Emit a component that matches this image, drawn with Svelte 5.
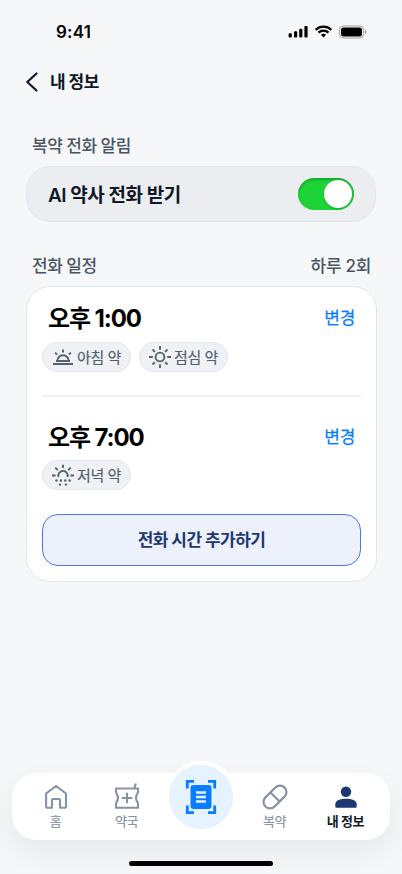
<script>
  let enabled = $state(true);
  const schedules = [
    { time: '오후 1:00', pills: [{ icon: 'sunrise', label: '아침 약' }, { icon: 'sun', label: '점심 약' }] },
    { time: '오후 7:00', pills: [{ icon: 'sunset', label: '저녁 약' }] }
  ];
</script>

<div class="screen">
  <div class="status">
    <span class="clock">9:41</span>
    <svg width="80" height="14" viewBox="0 0 80 14">
      <g fill="#000">
        <rect x="0.6" y="8.3" width="3.2" height="4.2" rx="1" />
        <rect x="6" y="6.2" width="3.2" height="6.3" rx="1" />
        <rect x="11.2" y="3.8" width="3.2" height="8.7" rx="1" />
        <rect x="16.4" y="1" width="3.2" height="11.5" rx="1" />
        <path d="M35.5 8.7c1 0 1.9.4 2.6 1l-2.6 2.7-2.6-2.7c.7-.6 1.6-1 2.6-1z" />
      </g>
      <g fill="none" stroke="#000" stroke-width="2.3">
        <path d="M27.7 4.800a11.200 11.200 0 0 1 15.600 0" />
        <path d="M30.500 7.700a7.200 7.200 0 0 1 10 0" />
      </g>
      <rect x="51.500" y="1" width="24" height="12" rx="3.800" fill="none" stroke="#000" stroke-opacity=".36" />
      <rect x="53" y="2.500" width="21" height="9" rx="2.500" />
      <path d="M77 5v4c.8-.3 1.300-1.100 1.300-2S77.800 5.300 77 5z" fill="#000" opacity=".4" />
    </svg>
  </div>

  <header>
    <svg width="14" height="20" viewBox="0 0 14 20"><path d="M11.500 1.500 2.300 10l9.200 8.500" fill="none" stroke="#101828" stroke-width="2.200" stroke-linecap="round" stroke-linejoin="round" /></svg>
    <h1>내 정보</h1>
  </header>

  <main>
    <h2 class="label">복약 전화 알림</h2>
    <section class="toggle-card">
      <span class="toggle-title">AI 약사 전화 받기</span>
      <button class="switch" class:on={enabled} aria-label="AI 약사 전화 받기" onclick={() => (enabled = !enabled)}><i></i></button>
    </section>

    <div class="label row"><span>전화 일정</span><span class="count">하루 2회</span></div>
    <section class="card">
      {#each schedules as s}
        <article>
          <div class="head"><span class="time">{s.time}</span><span class="edit">변경</span></div>
          <div class="pills">
            {#each s.pills as p}
              <span class="pill">
                <svg width="22" height="22" viewBox="0 0 22 22" fill="none" stroke="#506070" stroke-width="1.900">
                  {#if p.icon === 'sunrise'}
                    <path d="M1 18h20M4 15h14M5.300 15a5.700 5.700 0 0 1 11.400 0M11 3.500v3M3.100 6.600l2 2M18.900 6.600l-2 2" />
                  {:else if p.icon === 'sun'}
                    <circle cx="11" cy="11" r="4.400" />
                    <path d="M11 0v3.800M11 18.200V22M0 11h3.800M18.200 11H22M3.500 3.500l2.400 2.400M16.100 16.100l2.400 2.400M18.500 3.500l-2.400 2.400M5.900 16.100l-2.400 2.400" />
                  {:else}
                    <path d="M11 .7v3.300M0 11.500h3.600M18.400 11.500H22M3.300 3.700l2.500 2.500M18.700 3.700l-2.500 2.500M6.500 12.900a4.700 4.700 0 1 1 9 0" />
                    <g fill="#506070" stroke="none"><circle cx="4.500" cy="16.500" r="1.200" /><circle cx="8.900" cy="16.500" r="1.200" /><circle cx="13.300" cy="16.500" r="1.200" /><circle cx="17.700" cy="16.500" r="1.200" /><circle cx="8" cy="20.600" r="1.200" /><circle cx="14" cy="20.600" r="1.200" /></g>
                  {/if}
                </svg>
                <span class="pill-text">{p.label}</span>
              </span>
            {/each}
          </div>
        </article>
      {/each}
      <button class="add">전화 시간 추가하기</button>
    </section>
  </main>

  <nav>
    <div class="item">
      <svg width="26" height="26" viewBox="0 0 26 26" fill="none" stroke="#8593a3" stroke-width="2.100" stroke-linejoin="round"><path d="M3.100 9.500 13 2l10 7.500v13.300a1 1 0 0 1-1 1h-5V16a1 1 0 0 0-1-1h-6a1 1 0 0 0-1 1v7.800H4.100a1 1 0 0 1-1-1z" /></svg>
      <span>홈</span>
    </div>
    <div class="item">
      <svg width="26" height="26" viewBox="0 0 26 26" fill="none" stroke="#8593a3" stroke-width="2.100" stroke-linejoin="round"><path d="M2 4.500h22v3.800c-2.500 3.500-2.500 7.500 0 11v4.500H2v-4.500c2.500-3.500 2.500-7.500 0-11zM20.300 4.500 21.800-.5M13 8.700v10.600M7.700 14h10.600" /></svg>
      <span>약국</span>
    </div>
    <div class="scan">
      <svg width="32" height="36" viewBox="0 0 32 36">
        <path d="M2.300 9.500V2.300H9M23 2.300h6.700v7.200M29.700 26.500v7.200H23M9 33.700H2.300v-7.200" fill="none" stroke="#0a7cff" stroke-width="2.800" />
        <rect x="5.500" y="6" width="21" height="24" rx="3" fill="#0a7cff" />
        <path d="M11 13.500h10M11 18h10M11 22.500h10" stroke="#e5f2ff" stroke-width="2.700" />
      </svg>
    </div>
    <div class="item">
      <svg width="26" height="26" viewBox="0 0 26 26" fill="none" stroke="#8593a3" stroke-width="2.200"><g transform="rotate(-45 13 13)"><rect x="-.5" y="6.500" width="27" height="13" rx="6.500" /><path d="M13 6.500v13" /></g></svg>
      <span>복약</span>
    </div>
    <div class="item active">
      <svg width="26" height="26" viewBox="0 0 26 26" fill="#1d3871"><circle cx="13" cy="7.700" r="5.200" /><path d="M2.300 20.300c0-4 5-5.600 10.700-5.600s10.700 1.600 10.700 5.600v2.200c0 .8-.5 1.300-1.300 1.300H3.600c-.8 0-1.300-.5-1.300-1.300z" /></svg>
      <span>내 정보</span>
    </div>
  </nav>
  <div class="home"></div>
</div>

<style>
  :global(body) { background: #f5f7f9; }
  * { box-sizing: border-box; margin: 0; }
  .screen { width: 402px; height: 874px; display: flex; flex-direction: column; overflow: hidden; background: #f5f7f9; color: #101828; font-family: Inter, "Noto Sans CJK KR", sans-serif; white-space: nowrap; }
  button { font: inherit; padding: 0; border: 0; }
  svg { display: block; flex: none; overflow: visible; }
  .status { height: 64px; padding: 0 34px 0 56px; display: flex; align-items: center; justify-content: space-between; }
  .clock { font-size: 17px; font-weight: 600; color: #000; letter-spacing: .2px; }
  header { height: 36px; padding-left: 25px; display: flex; align-items: center; gap: 11px; }
  h1 { font-size: 17px; line-height: 24px; font-weight: 700; letter-spacing: -.55px; }
  main { padding: 34px 25px 0 26px; }
  .label { font-size: 17px; line-height: 24px; font-weight: 500; color: #4a5564; padding-left: 6px; letter-spacing: -.5px; }
  .toggle-card { width: 350px; height: 56px; margin-top: 8px; padding: 0 21px 0; border: 1px solid #e1e7ef; border-radius: 24px; background: #ecedf1; display: flex; align-items: center; justify-content: space-between; }
  .toggle-title { font-size: 19px; font-weight: 600; letter-spacing: -.5px; padding-bottom: 2px; }
  .switch { width: 56px; height: 32px; padding: 2px; border-radius: 16px; background: #b8bec6; display: flex; box-shadow: inset 0 2px 3px rgba(0, 0, 0, .22); }
  .switch.on { background: #1dd337; justify-content: flex-end; }
  .switch i { width: 28px; height: 28px; border-radius: 50%; background: #fff; box-shadow: 0 1px 2px rgba(0, 0, 0, .2); }
  .row { display: flex; justify-content: space-between; margin-top: 32px; padding-right: 6px; }
  .count { letter-spacing: -.3px; }
  .card { height: 296px; margin-top: 8px; padding: 0 15px; border: 1px solid #e1e7ef; border-radius: 24px; background: #fff; }
  article { height: 108px; padding-top: 14px; }
  article + article { height: 119px; padding-top: 24px; border-top: 2px solid #eff1f4; }
  .head { height: 30px; padding: 0 6px; display: flex; align-items: center; justify-content: space-between; }
  article + article .head { margin-top: -1px; }
  .time { font-size: 24px; font-weight: 700; color: #000; letter-spacing: -1.1px; }
  .edit { font-size: 17px; font-weight: 400; -webkit-text-stroke: .25px #0a7cff; color: #0a7cff; letter-spacing: -.3px; }
  .pills { display: flex; gap: 8px; margin-top: 11px; }
  article + article .pills { margin-top: 10px; }
  .pill { width: 89px; height: 30px; padding-left: 9px; border: 1px solid #dfe6ee; border-radius: 15px; background: #f0f1f4; display: flex; align-items: center; gap: 3px; color: #506070; font-size: 15px; letter-spacing: -.4px; }
  .pill-text { padding-bottom: 2px; -webkit-text-stroke: .15px #506070; }
  .add { display: block; width: 319px; height: 52px; padding-bottom: 3px; border: 1px solid #4879e5; border-radius: 16px; background: #edf1fc; color: #1d3871; font-size: 17px; font-weight: 700; letter-spacing: -.55px; text-align: center; }
  nav { width: 378px; height: 67px; margin: auto 12px 0; padding: 0 9px 0 8px; border-radius: 24px; background: #fff; display: flex; box-shadow: 0 12px 28px rgba(30, 35, 40, .07); }
  .item { width: 71px; padding-top: 11px; display: flex; flex-direction: column; align-items: center; gap: 2px; color: #8593a3; font-size: 13px; line-height: 18px; letter-spacing: -.4px; -webkit-text-stroke: .15px currentColor; }
  .active { color: #101828; font-weight: 700; -webkit-text-stroke: 0; }
  .scan { width: 72px; height: 72px; margin: -12px 2px 0 3px; border: 4px solid #fff; border-radius: 50%; background: #e5f2ff; display: flex; align-items: center; justify-content: center; }
  .home { width: 144px; height: 5px; margin: 21px auto 8px 129px; border-radius: 3px; background: #000; flex: none; }
</style>
